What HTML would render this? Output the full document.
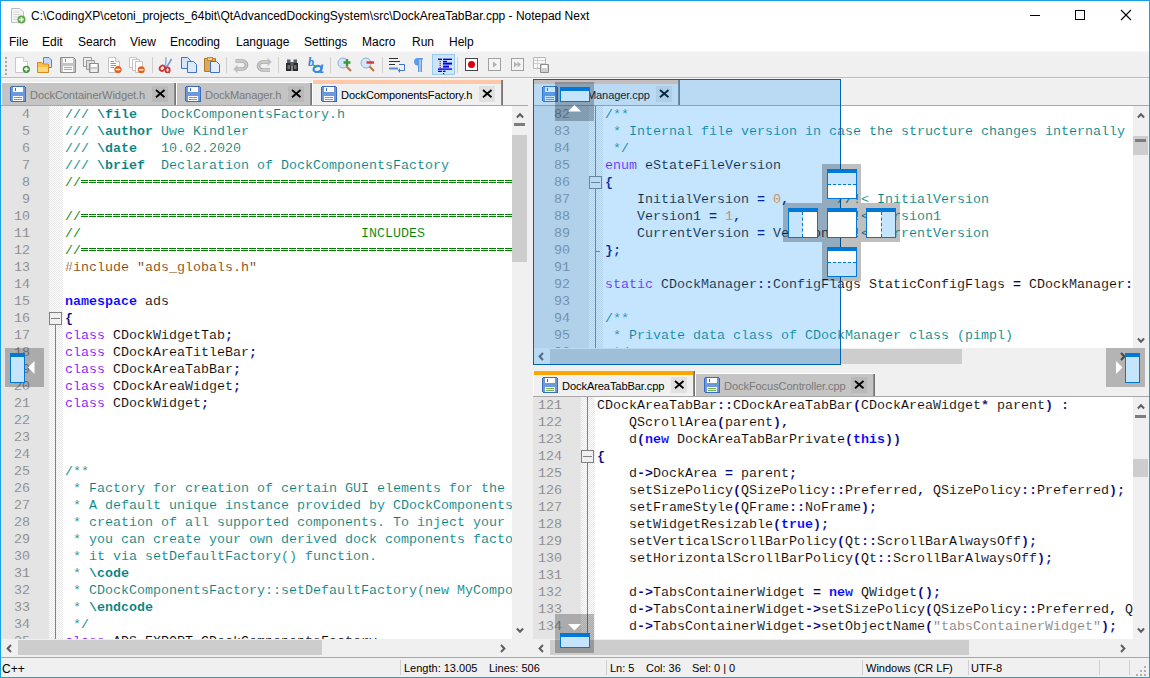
<!DOCTYPE html>
<html><head><meta charset="utf-8"><style>
*{box-sizing:content-box}
html,body{margin:0;padding:0}
body{width:1150px;height:678px;position:relative;overflow:hidden;background:#f0f0f0;font-family:"Liberation Sans",sans-serif}
div{position:absolute}
.ui{position:absolute;font-size:12px;line-height:16px;white-space:nowrap;color:#000}
.st11{font-size:11px}
.tabt{font-size:11.1px;letter-spacing:-0.1px}
.tab{position:absolute;box-sizing:border-box}
.nums{position:absolute;font-family:"Liberation Mono",monospace;font-size:13.333px;line-height:17px;color:#808080;text-align:right;-webkit-text-stroke:0.15px #e4e4e4}
.nums div,.code div{position:static;height:17px;white-space:pre}
.code{position:absolute;font-family:"Liberation Mono",monospace;font-size:13.333px;line-height:17px;color:#000;white-space:pre;-webkit-text-stroke:0.12px #fff}
.code b,.code i{font-style:normal}
.code b{font-weight:bold}
.cd{color:#008080}
.ck{color:#008080}
.cg{color:#008000}
.pp{color:#804000}
.kw{color:#0000ff}
.ty{color:#8000ff}
.op{color:#000080}
.nu{color:#ff8000}
.st{color:#808080}
.fold{position:absolute;background-color:#fff;background-image:repeating-conic-gradient(#e6e6e6 0 25%,#fff 0 50%);background-size:2px 2px}
.eq{display:inline-block;height:17px;vertical-align:top;background-image:repeating-linear-gradient(90deg,#008000 0 7px,transparent 7px 8px),repeating-linear-gradient(90deg,#008000 0 7px,transparent 7px 8px);background-size:100% 1px,100% 1px;background-position:0 6px,0 8px;background-repeat:no-repeat}
.sep{position:absolute;width:1px;background:#d0d0d0}
</style></head><body>

<div style="left:0;top:0;width:1150px;height:52px;background:#fff"></div>
<div style="left:0;top:51px;width:1150px;height:1px;background:#f7f7f7"></div>
<svg style="position:absolute;left:10px;top:7px" width="16" height="17" viewBox="0 0 16 17"><path d="M1.5 1.5H10L13.5 5V15.5H1.5Z" fill="#f4f4f4" stroke="#bdbdbd"/><path d="M3.5 5h6M3.5 7.5h7M3.5 10h5M3.5 12.5h4" stroke="#d6d6d6"/><circle cx="11.5" cy="12.5" r="4" fill="#5aa845"/><path d="M11.5 10v5M9 12.5h5" stroke="#fff" stroke-width="1.6"/></svg>
<div class="ui" style="left:31px;top:8px;font-size:12px">C:\CodingXP\cetoni_projects_64bit\QtAdvancedDockingSystem\src\DockAreaTabBar.cpp - Notepad Next</div>
<div style="left:1030px;top:15px;width:10px;height:1px;background:#000"></div>
<div style="left:1075px;top:10px;width:8px;height:8px;border:1px solid #000"></div>
<svg style="position:absolute;left:1120px;top:9px" width="12" height="12"><path d="M1 1L11 11M11 1L1 11" stroke="#000" stroke-width="1.1"/></svg>
<div class="ui" style="left:9px;top:34px">File</div>
<div class="ui" style="left:42px;top:34px">Edit</div>
<div class="ui" style="left:78px;top:34px">Search</div>
<div class="ui" style="left:130px;top:34px">View</div>
<div class="ui" style="left:170px;top:34px">Encoding</div>
<div class="ui" style="left:236px;top:34px">Language</div>
<div class="ui" style="left:304px;top:34px">Settings</div>
<div class="ui" style="left:362px;top:34px">Macro</div>
<div class="ui" style="left:412px;top:34px">Run</div>
<div class="ui" style="left:449px;top:34px">Help</div>
<div style="left:0;top:52px;width:1150px;height:25px;background:#f0f0f0"></div>
<div style="left:0;top:77px;width:1150px;height:1px;background:#bcbcbc"></div>
<div style="left:0;top:78px;width:1150px;height:1px;background:#f7f7f7"></div>
<div style="left:5px;top:57px;width:2px;height:2px;background:#a8a8a8"></div>
<div style="left:5px;top:61px;width:2px;height:2px;background:#a8a8a8"></div>
<div style="left:5px;top:65px;width:2px;height:2px;background:#a8a8a8"></div>
<div style="left:5px;top:69px;width:2px;height:2px;background:#a8a8a8"></div>
<div style="left:5px;top:73px;width:2px;height:2px;background:#a8a8a8"></div>
<svg style="position:absolute;left:14px;top:57px" width="16" height="16" viewBox="0 0 16 16"><path d="M1.5 0.5H9.5L13.5 4.5V15.5H1.5Z" fill="#fff" stroke="#c8c8c8"/><path d="M9.5 0.5V4.5H13.5" fill="#f0f0f0" stroke="#d0d0d0"/><circle cx="12.3" cy="12.3" r="3.6" fill="#3a9232"/><path d="M12.3 10v4.6M10 12.3h4.6" stroke="#fff" stroke-width="1.6"/></svg>
<svg style="position:absolute;left:37px;top:57px" width="16" height="16" viewBox="0 0 16 16"><path d="M6.5 0.5H12L14.5 3V10.5H6.5Z" fill="#c8dcfa" stroke="#4f86d6"/><path d="M0.5 5.5H5L6.5 7H11.5V15.5H0.5Z" fill="#f6c04a" stroke="#d68a1e"/><path d="M1 10H11V15H1Z" fill="#fbd77a"/></svg>
<svg style="position:absolute;left:60px;top:57px" width="16" height="16" viewBox="0 0 16 16"><path d="M0.5 0.5H13.5L15.5 2.5V15.5H0.5Z" fill="#c4c4c4" stroke="#8c8c8c"/><rect x="3" y="1" width="10" height="5" fill="#fafafa"/><rect x="5" y="2" width="1" height="3" fill="#8c8c8c"/><rect x="3" y="9" width="10" height="6" fill="#fafafa"/><rect x="4" y="10" width="8" height="1" fill="#a8a8a8"/><rect x="4" y="12" width="8" height="1" fill="#a8a8a8"/></svg>
<svg style="position:absolute;left:83px;top:57px" width="16" height="16" viewBox="0 0 16 16"><path d="M0.5 0.5H8.5V9.5H0.5Z" fill="#eee" stroke="#999"/><path d="M3.5 3.5H11.5V12.5H3.5Z" fill="#ddd" stroke="#999"/><path d="M6.5 6.5H15.5V15.5H6.5Z" fill="#c8c8c8" stroke="#8c8c8c"/><rect x="8" y="7" width="6" height="3" fill="#fff"/><rect x="8" y="12" width="6" height="3" fill="#eee"/></svg>
<svg style="position:absolute;left:106px;top:57px" width="16" height="16" viewBox="0 0 16 16"><path d="M2.5 0.5H9.5L13.5 4.5V15.5H2.5Z" fill="#fff" stroke="#c4c4c4"/><path d="M9.5 0.5V4.5H13.5" fill="#eee" stroke="#c4c4c4"/><path d="M4.5 4.5H8M4.5 6.5H10M4.5 8.5H10M4.5 10.5H8" stroke="#999"/><circle cx="12" cy="12.5" r="3.6" fill="#e8601c"/><path d="M9.8 12.5h4.4" stroke="#fff" stroke-width="1.5"/></svg>
<svg style="position:absolute;left:129px;top:57px" width="16" height="16" viewBox="0 0 16 16"><path d="M0.5 0.5H7.5V10.5H0.5Z" fill="#fff" stroke="#c4c4c4"/><path d="M3.5 2.5H10.5V13.5H3.5Z" fill="#fff" stroke="#c4c4c4"/><path d="M6.5 4.5H13.5V15.5H6.5Z" fill="#fff" stroke="#c4c4c4"/><circle cx="12.3" cy="12.8" r="3.5" fill="#e8601c"/><path d="M10.2 12.8h4.2" stroke="#fff" stroke-width="1.5"/></svg>
<svg style="position:absolute;left:158px;top:57px" width="16" height="16" viewBox="0 0 16 16"><path d="M8 0.3L7.6 10" stroke="#8fb4e0" stroke-width="1.6"/><path d="M13.6 2L8.9 9.8" stroke="#6f9ad0" stroke-width="1.6"/><ellipse cx="4.3" cy="11.2" rx="2.4" ry="2.8" fill="none" stroke="#d23030" stroke-width="1.8" transform="rotate(40 4.3 11.2)"/><ellipse cx="9.6" cy="13" rx="2.1" ry="2.7" fill="none" stroke="#d23030" stroke-width="1.8"/></svg>
<svg style="position:absolute;left:181px;top:57px" width="16" height="16" viewBox="0 0 16 16"><path d="M0.5 0.5H6.5L9.5 3.5V11.5H0.5Z" fill="#d4e4fa" stroke="#3d73c8"/><path d="M6.5 4.5H12.5L15.5 7.5V15.5H6.5Z" fill="#dce9fb" stroke="#3d73c8"/></svg>
<svg style="position:absolute;left:204px;top:57px" width="16" height="16" viewBox="0 0 16 16"><path d="M0.5 1.5H11.5V14.5H0.5Z" fill="#e0a858" stroke="#b07830"/><rect x="3.5" y="0.5" width="5" height="3" fill="#f4d080" stroke="#c08838"/><path d="M6.5 4.5H12.5L15.5 7.5V15.5H6.5Z" fill="#e4eefc" stroke="#3d73c8"/></svg>
<svg style="position:absolute;left:233px;top:57px" width="16" height="16" viewBox="0 0 16 16"><path d="M2.5 4H9.5A4 4 0 0 1 9.5 12H4" fill="none" stroke="#a6a6a6" stroke-width="3.6"/><path d="M2.5 4H9.5A4 4 0 0 1 9.5 12H4" fill="none" stroke="#cacaca" stroke-width="1.8"/><path d="M0.3 12L4.5 7.8V16.2Z" fill="#bdbdbd"/></svg>
<svg style="position:absolute;left:256px;top:57px" width="16" height="16" viewBox="0 0 16 16"><path d="M13 5H6.5A4 4 0 0 0 6.5 13H14" fill="none" stroke="#a6a6a6" stroke-width="3.6"/><path d="M13 5H6.5A4 4 0 0 0 6.5 13H14" fill="none" stroke="#cacaca" stroke-width="1.8"/><path d="M15.7 5L11.5 0.8V9.2Z" fill="#bdbdbd"/></svg>
<svg style="position:absolute;left:285px;top:57px" width="16" height="16" viewBox="0 0 16 16"><path d="M1 6H6.5V14H1Z M7.5 6H13V14H7.5Z" fill="#2a2a2a"/><path d="M2 2.5H5.5V6H2Z M8.5 2.5H12V6H8.5Z M5.5 5H8.5V9H5.5Z" fill="#5a6068"/><path d="M2.5 9H5M9 9H11.5M2.5 11H5M9 11H11.5" stroke="#a8b4c0"/></svg>
<svg style="position:absolute;left:308px;top:57px" width="16" height="16" viewBox="0 0 16 16"><text x="0" y="9" font-family="Liberation Serif" font-style="italic" font-weight="bold" font-size="12" fill="#2f7fe0">b</text><ellipse cx="9.5" cy="12" rx="4" ry="3" fill="none" stroke="#3a86e6" stroke-width="2.2" transform="rotate(-15 9.5 12)"/><path d="M14.5 7.5L12.5 15.5H15.5" fill="none" stroke="#3a86e6" stroke-width="2"/><path d="M5 7.5L8 10.5" stroke="#3aa040" stroke-width="1.6"/></svg>
<svg style="position:absolute;left:337px;top:57px" width="16" height="16" viewBox="0 0 16 16"><circle cx="6" cy="6" r="5" fill="#d6e6f8" stroke="#8ab0d8"/><path d="M9.5 9.5L14 14" stroke="#b8793a" stroke-width="2.2"/><path d="M10 2V9M6.5 5.5H13.5" stroke="#3a9a3a" stroke-width="2.4"/></svg>
<svg style="position:absolute;left:360px;top:57px" width="16" height="16" viewBox="0 0 16 16"><circle cx="6" cy="6" r="5" fill="#d6e6f8" stroke="#8ab0d8"/><path d="M9.5 9.5L14 14" stroke="#b8793a" stroke-width="2.2"/><path d="M6.5 5.5H14" stroke="#e03030" stroke-width="2.4"/></svg>
<svg style="position:absolute;left:389px;top:57px" width="16" height="16" viewBox="0 0 16 16"><path d="M0 1.5H9M0 4.5H11M0 7.5H6" stroke="#333"/><path d="M0 11.5H9" stroke="#5a8ad8" stroke-width="2"/><path d="M10 7.5H15.5V13.5H11" fill="none" stroke="#3d73c8"/><path d="M11 11V16L9 13.5Z" fill="#3d73c8"/></svg>
<svg style="position:absolute;left:412px;top:57px" width="16" height="16" viewBox="0 0 16 16"><path d="M5 1H11V2.5H10V15H8.5V2.5H7.5V15H6V8.5A3.8 3.8 0 0 1 5 1Z" fill="#5b9be8"/></svg>
<div style="position:absolute;left:432px;top:54px;width:21px;height:19px;background:#cce4f7;border:1px solid #99c9ef"></div>
<svg style="position:absolute;left:435px;top:57px" width="18" height="18" viewBox="0 0 18 18"><g fill="#0000f0"><rect x="3" y="1.6" width="4" height="1.4"/><rect x="8" y="1.6" width="9" height="1.4"/><rect x="8" y="3.8" width="4" height="1.4"/><rect x="8" y="5.6" width="9" height="2"/><rect x="8" y="8.6" width="6" height="2"/><rect x="3" y="11.4" width="14" height="1.4"/><rect x="3" y="13.6" width="4" height="1.4"/><rect x="8" y="13.6" width="2.5" height="1.4"/><rect x="8" y="16" width="1.2" height="1.2"/></g><g fill="#f00000"><rect x="4.6" y="4" width="1.2" height="1.2"/><rect x="4.6" y="6" width="1.2" height="1.2"/><rect x="4.6" y="8" width="1.2" height="1.2"/><rect x="4.6" y="10" width="1.2" height="1.2"/></g></svg>
<svg style="position:absolute;left:464px;top:57px" width="16" height="16" viewBox="0 0 16 16"><rect x="1.5" y="1.5" width="12" height="12" fill="#fff" stroke="#444"/><circle cx="7.5" cy="7.5" r="3.5" fill="#d80010"/></svg>
<svg style="position:absolute;left:487px;top:57px" width="16" height="16" viewBox="0 0 16 16"><rect x="1.5" y="1.5" width="12" height="12" fill="#f4f4f4" stroke="#a0a0a0"/><path d="M6 4.5L10 7.5L6 10.5Z" fill="#b0b0b0"/></svg>
<svg style="position:absolute;left:510px;top:57px" width="16" height="16" viewBox="0 0 16 16"><rect x="1.5" y="1.5" width="12" height="12" fill="#f4f4f4" stroke="#a0a0a0"/><path d="M4 4.5L7.5 7.5L4 10.5ZM7.5 4.5L11 7.5L7.5 10.5Z" fill="#b0b0b0"/></svg>
<svg style="position:absolute;left:533px;top:57px" width="16" height="17" viewBox="0 0 16 17"><path d="M0.5 0.5H12.5V11.5H0.5Z" fill="#f8f8f8" stroke="#b8b8b8"/><path d="M1 3.5H12M1 6.5H12M4.5 1V11" stroke="#d0d0d0"/><path d="M7.5 7.5H15.5V15.5H7.5Z" fill="#d0d0d0" stroke="#8c8c8c"/><rect x="9" y="8" width="5" height="3" fill="#fff"/></svg>
<div style="position:absolute;left:152px;top:57px;width:1px;height:16px;background:#d0d0d0"></div>
<div style="position:absolute;left:226px;top:57px;width:1px;height:16px;background:#d0d0d0"></div>
<div style="position:absolute;left:278px;top:57px;width:1px;height:16px;background:#d0d0d0"></div>
<div style="position:absolute;left:330px;top:57px;width:1px;height:16px;background:#d0d0d0"></div>
<div style="position:absolute;left:382px;top:57px;width:1px;height:16px;background:#d0d0d0"></div>
<div style="position:absolute;left:457px;top:57px;width:1px;height:16px;background:#d0d0d0"></div>
<div style="left:1px;top:105px;width:527px;height:1px;background:#a8a8a8"></div>
<div style="left:1px;top:82px;width:175px;height:23px;background:#fff"></div>
<div style="left:2px;top:83px;width:174px;height:22px;background:#c4c4c4"></div>
<div style="left:174px;top:83px;width:1px;height:22px;background:#8c8c8c"></div>
<div style="left:175px;top:83px;width:1px;height:22px;background:#747474"></div>
<div style="position:absolute;left:10px;top:86px;width:16px;height:16px"><svg width="16" height="16" viewBox="0 0 16 16" shape-rendering="crispEdges"><path d="M1 0H14L16 2V15L15 16H1L0 15V1Z" fill="#3b6bc0"/><rect x="1" y="1" width="14" height="14" fill="#6e98dc"/><rect x="3" y="1" width="10" height="5" fill="#fff"/><rect x="5" y="2" width="1" height="3" fill="#3b6bc0"/><rect x="3" y="10" width="10" height="5" fill="#fff"/><rect x="4" y="11" width="8" height="1" fill="#6cb44e"/><rect x="4" y="13" width="8" height="1" fill="#6cb44e"/></svg></div>
<div class="ui tabt" style="left:30px;top:87px;color:#7a7a7a">DockContainerWidget.h</div>
<div style="position:absolute;left:152px;top:86px;width:16px;height:16px;background:#b9b9b9"><svg width="16" height="16" viewBox="0 0 16 16"><path d="M4 4L12.5 11.3M12.5 4L4 11.3" stroke="#000" stroke-width="1.8"/></svg></div>
<div style="left:176px;top:82px;width:136px;height:23px;background:#fff"></div>
<div style="left:177px;top:83px;width:135px;height:22px;background:#c4c4c4"></div>
<div style="left:310px;top:83px;width:1px;height:22px;background:#8c8c8c"></div>
<div style="left:311px;top:83px;width:1px;height:22px;background:#747474"></div>
<div style="position:absolute;left:185px;top:86px;width:16px;height:16px"><svg width="16" height="16" viewBox="0 0 16 16" shape-rendering="crispEdges"><path d="M1 0H14L16 2V15L15 16H1L0 15V1Z" fill="#3b6bc0"/><rect x="1" y="1" width="14" height="14" fill="#6e98dc"/><rect x="3" y="1" width="10" height="5" fill="#fff"/><rect x="5" y="2" width="1" height="3" fill="#3b6bc0"/><rect x="3" y="10" width="10" height="5" fill="#fff"/><rect x="4" y="11" width="8" height="1" fill="#6cb44e"/><rect x="4" y="13" width="8" height="1" fill="#6cb44e"/></svg></div>
<div class="ui tabt" style="left:205px;top:87px;color:#7a7a7a">DockManager.h</div>
<div style="position:absolute;left:288px;top:86px;width:16px;height:16px;background:#b9b9b9"><svg width="16" height="16" viewBox="0 0 16 16"><path d="M4 4L12.5 11.3M12.5 4L4 11.3" stroke="#000" stroke-width="1.8"/></svg></div>
<div style="left:312px;top:80px;width:1px;height:25px;background:#fff"></div>
<div style="left:313px;top:80px;width:190px;height:4px;background:#ffc8a8"></div>
<div style="left:313px;top:84px;width:190px;height:21px;background:#f0f0f0"></div>
<div style="left:501px;top:80px;width:1px;height:25px;background:#8c8c8c"></div>
<div style="left:502px;top:80px;width:1px;height:25px;background:#747474"></div>
<div style="position:absolute;left:321px;top:86px;width:16px;height:16px"><svg width="16" height="16" viewBox="0 0 16 16" shape-rendering="crispEdges"><path d="M1 0H14L16 2V15L15 16H1L0 15V1Z" fill="#3b6bc0"/><rect x="1" y="1" width="14" height="14" fill="#6e98dc"/><rect x="3" y="1" width="10" height="5" fill="#fff"/><rect x="5" y="2" width="1" height="3" fill="#3b6bc0"/><rect x="3" y="10" width="10" height="5" fill="#fff"/><rect x="4" y="11" width="8" height="1" fill="#6cb44e"/><rect x="4" y="13" width="8" height="1" fill="#6cb44e"/></svg></div>
<div class="ui tabt" style="left:341px;top:87px;color:#000">DockComponentsFactory.h</div>
<div style="position:absolute;left:479px;top:86px;width:16px;height:16px;background:#e0e0e0"><svg width="16" height="16" viewBox="0 0 16 16"><path d="M4 4L12.5 11.3M12.5 4L4 11.3" stroke="#000" stroke-width="1.8"/></svg></div>
<div style="position:absolute;left:1px;top:106px;width:511px;height:533px;background:#fff;overflow:hidden">
<div style="position:absolute;left:0;top:0;width:48px;height:533px;background:#e4e4e4"></div>
<div class="fold" style="left:48px;top:0;width:14px;height:533px"></div>
<div style="position:absolute;left:48px;top:206px;width:11px;height:11px;border:1px solid #808080;background:#f0f0f0"><div style="position:absolute;left:1px;top:5px;width:9px;height:1px;background:#808080"></div></div>
<div style="position:absolute;left:54px;top:219px;width:1px;height:314px;background:#808080"></div>
<div class="nums" style="left:0;top:0;width:29px"><div>4</div><div>5</div><div>6</div><div>7</div><div>8</div><div>9</div><div>10</div><div>11</div><div>12</div><div>13</div><div>14</div><div>15</div><div>16</div><div>17</div><div>18</div><div>19</div><div>20</div><div>21</div><div>22</div><div>23</div><div>24</div><div>25</div><div>26</div><div>27</div><div>28</div><div>29</div><div>30</div><div>31</div><div>32</div><div>33</div><div>34</div><div>35</div></div>
<div class="code" style="left:64px;top:0"><div><i class="cd">/// </i><b class="ck">\file</b><i class="cd">   DockComponentsFactory.h</i> </div><div><i class="cd">/// </i><b class="ck">\author</b><i class="cd"> Uwe Kindler</i> </div><div><i class="cd">/// </i><b class="ck">\date</b><i class="cd">   10.02.2020</i> </div><div><i class="cd">/// </i><b class="ck">\brief</b><i class="cd">  Declaration of DockComponentsFactory</i> </div><div><i class="cg">//</i><span class="eq" style="width:608px"></span> </div><div> </div><div><i class="cg">//</i><span class="eq" style="width:608px"></span> </div><div><i class="cg">//                                   INCLUDES</i> </div><div><i class="cg">//</i><span class="eq" style="width:608px"></span> </div><div><i class="pp">#include "ads_globals.h"</i> </div><div> </div><div><b class="kw">namespace</b> ads </div><div><b class="op">{</b> </div><div><i class="ty">class</i> CDockWidgetTab<b class="op">;</b> </div><div><i class="ty">class</i> CDockAreaTitleBar<b class="op">;</b> </div><div><i class="ty">class</i> CDockAreaTabBar<b class="op">;</b> </div><div><i class="ty">class</i> CDockAreaWidget<b class="op">;</b> </div><div><i class="ty">class</i> CDockWidget<b class="op">;</b> </div><div> </div><div> </div><div> </div><div><i class="cd">/**</i> </div><div><i class="cd"> * Factory for creation of certain GUI elements for the docking framework.</i> </div><div><i class="cd"> * A default unique instance provided by CDockComponentsFactory is used for</i> </div><div><i class="cd"> * creation of all supported components. To inject your custom components,</i> </div><div><i class="cd"> * you can create your own derived dock components factory and register</i> </div><div><i class="cd"> * it via setDefaultFactory() function.</i> </div><div><i class="cd"> * </i><b class="ck">\code</b><i class="cd"></i> </div><div><i class="cd"> * CDockComponentsFactory::setDefaultFactory(new MyComponentsFactory()));</i> </div><div><i class="cd"> * </i><b class="ck">\endcode</b><i class="cd"></i> </div><div><i class="cd"> */</i> </div><div><i class="ty">class</i> ADS_EXPORT CDockComponentsFactory </div></div>
</div>
<div style="left:512px;top:106px;width:17px;height:533px;background:#f0f0f0"></div>
<svg style="position:absolute;left:515.5px;top:111.5px" width="8" height="7"><path d="M0.9 5.5L4 2.2L7.1 5.5" fill="none" stroke="#5f5f5f" stroke-width="2"/></svg>
<div style="left:514px;top:123px;width:11px;height:3px;background:#7d7d7d"></div>
<div style="left:512px;top:135px;width:15px;height:127px;background:#cdcdcd"></div>
<svg style="position:absolute;left:515.5px;top:626.5px" width="8" height="7"><path d="M0.9 1.5L4 4.8L7.1 1.5" fill="none" stroke="#5f5f5f" stroke-width="2"/></svg>
<div style="left:1px;top:639px;width:528px;height:18px;background:#f0f0f0"></div>
<svg style="position:absolute;left:5.0px;top:643.5px" width="8" height="9"><path d="M6 1L2.6 4.5L6 8" fill="none" stroke="#5f5f5f" stroke-width="2"/></svg>
<div style="left:18px;top:640px;width:304px;height:15px;background:#cdcdcd"></div>
<svg style="position:absolute;left:499.0px;top:643.5px" width="8" height="9"><path d="M2 1L5.4 4.5L2 8" fill="none" stroke="#5f5f5f" stroke-width="2"/></svg>
<div style="left:533px;top:105px;width:616px;height:1px;background:#a8a8a8"></div>
<div style="left:533px;top:80px;width:1px;height:25px;background:#fff"></div>
<div style="left:534px;top:80px;width:146px;height:4px;background:#ffc8a8"></div>
<div style="left:534px;top:84px;width:146px;height:21px;background:#f0f0f0"></div>
<div style="left:678px;top:80px;width:1px;height:25px;background:#8c8c8c"></div>
<div style="left:679px;top:80px;width:1px;height:25px;background:#747474"></div>
<div style="position:absolute;left:542px;top:86px;width:16px;height:16px"><svg width="16" height="16" viewBox="0 0 16 16" shape-rendering="crispEdges"><path d="M1 0H14L16 2V15L15 16H1L0 15V1Z" fill="#3b6bc0"/><rect x="1" y="1" width="14" height="14" fill="#6e98dc"/><rect x="3" y="1" width="10" height="5" fill="#fff"/><rect x="5" y="2" width="1" height="3" fill="#3b6bc0"/><rect x="3" y="10" width="10" height="5" fill="#fff"/><rect x="4" y="11" width="8" height="1" fill="#6cb44e"/><rect x="4" y="13" width="8" height="1" fill="#6cb44e"/></svg></div>
<div class="ui tabt" style="left:562px;top:87px;color:#000">DockManager.cpp</div>
<div style="position:absolute;left:656px;top:86px;width:16px;height:16px;background:#e0e0e0"><svg width="16" height="16" viewBox="0 0 16 16"><path d="M4 4L12.5 11.3M12.5 4L4 11.3" stroke="#000" stroke-width="1.8"/></svg></div>
<div style="position:absolute;left:533px;top:106px;width:600px;height:242px;background:#fff;overflow:hidden">
<div style="position:absolute;left:0;top:0;width:56px;height:242px;background:#e4e4e4"></div>
<div class="fold" style="left:56px;top:0;width:14px;height:242px"></div>
<div style="position:absolute;left:62px;top:0px;width:1px;height:242px;background:#808080"></div>
<div style="position:absolute;left:56px;top:70px;width:11px;height:11px;border:1px solid #808080;background:#f0f0f0"><div style="position:absolute;left:1px;top:5px;width:9px;height:1px;background:#808080"></div></div>
<div style="position:absolute;left:62px;top:145px;width:5px;height:1px;background:#808080"></div>
<div class="nums" style="left:0;top:0;width:37px"><div>82</div><div>83</div><div>84</div><div>85</div><div>86</div><div>87</div><div>88</div><div>89</div><div>90</div><div>91</div><div>92</div><div>93</div><div>94</div><div>95</div><div>96</div></div>
<div class="code" style="left:72px;top:0"><div><i class="cd">/**</i> </div><div><i class="cd"> * Internal file version in case the structure changes internally</i> </div><div><i class="cd"> */</i> </div><div><i class="ty">enum</i> eStateFileVersion </div><div><b class="op">{</b> </div><div>    InitialVersion <b class="op">=</b> <i class="nu">0</i><b class="op">,</b>      <i class="cd">//!&lt; InitialVersion</i> </div><div>    Version1 <b class="op">=</b> <i class="nu">1</i><b class="op">,</b>            <i class="cd">//!&lt; Version1</i> </div><div>    CurrentVersion <b class="op">=</b> Version1<i class="cd">//!&lt; CurrentVersion</i> </div><div><b class="op">};</b> </div><div> </div><div><i class="ty">static</i> CDockManager<b class="op">::</b>ConfigFlags StaticConfigFlags <b class="op">=</b> CDockManager<b class="op">::</b>DefaultNonOpaqueConfig<b class="op">;</b> </div><div> </div><div><i class="cd">/**</i> </div><div><i class="cd"> * Private data class of CDockManager class (pimpl)</i> </div><div><i class="cd"> */</i> </div></div>
</div>
<div style="left:1133px;top:106px;width:16px;height:242px;background:#f0f0f0"></div>
<svg style="position:absolute;left:1137.0px;top:111.5px" width="8" height="7"><path d="M0.9 5.5L4 2.2L7.1 5.5" fill="none" stroke="#5f5f5f" stroke-width="2"/></svg>
<div style="left:1133px;top:136px;width:15px;height:19px;background:#cdcdcd"></div>
<div style="left:1135px;top:139px;width:11px;height:3px;background:#7d7d7d"></div>
<svg style="position:absolute;left:1137.0px;top:336.5px" width="8" height="7"><path d="M0.9 1.5L4 4.8L7.1 1.5" fill="none" stroke="#5f5f5f" stroke-width="2"/></svg>
<div style="left:533px;top:348px;width:616px;height:17px;background:#f0f0f0"></div>
<svg style="position:absolute;left:537.0px;top:351.5px" width="8" height="9"><path d="M6 1L2.6 4.5L6 8" fill="none" stroke="#5f5f5f" stroke-width="2"/></svg>
<div style="left:550px;top:349px;width:412px;height:15px;background:#cdcdcd"></div>
<svg style="position:absolute;left:1119.0px;top:351.5px" width="8" height="9"><path d="M2 1L5.4 4.5L2 8" fill="none" stroke="#5f5f5f" stroke-width="2"/></svg>
<div style="left:533px;top:396px;width:616px;height:1px;background:#a8a8a8"></div>
<div style="left:533px;top:371px;width:1px;height:25px;background:#fff"></div>
<div style="left:534px;top:371px;width:161px;height:4px;background:#ffa500"></div>
<div style="left:534px;top:375px;width:161px;height:21px;background:#f0f0f0"></div>
<div style="left:693px;top:371px;width:1px;height:25px;background:#8c8c8c"></div>
<div style="left:694px;top:371px;width:1px;height:25px;background:#747474"></div>
<div style="position:absolute;left:542px;top:377px;width:16px;height:16px"><svg width="16" height="16" viewBox="0 0 16 16" shape-rendering="crispEdges"><path d="M1 0H14L16 2V15L15 16H1L0 15V1Z" fill="#3b6bc0"/><rect x="1" y="1" width="14" height="14" fill="#6e98dc"/><rect x="3" y="1" width="10" height="5" fill="#fff"/><rect x="5" y="2" width="1" height="3" fill="#3b6bc0"/><rect x="3" y="10" width="10" height="5" fill="#fff"/><rect x="4" y="11" width="8" height="1" fill="#6cb44e"/><rect x="4" y="13" width="8" height="1" fill="#6cb44e"/></svg></div>
<div class="ui tabt" style="left:562px;top:378px;color:#000">DockAreaTabBar.cpp</div>
<div style="position:absolute;left:671px;top:377px;width:16px;height:16px;background:#e0e0e0"><svg width="16" height="16" viewBox="0 0 16 16"><path d="M4 4L12.5 11.3M12.5 4L4 11.3" stroke="#000" stroke-width="1.8"/></svg></div>
<div style="left:695px;top:373px;width:180px;height:23px;background:#fff"></div>
<div style="left:696px;top:374px;width:179px;height:22px;background:#c4c4c4"></div>
<div style="left:873px;top:374px;width:1px;height:22px;background:#8c8c8c"></div>
<div style="left:874px;top:374px;width:1px;height:22px;background:#747474"></div>
<div style="position:absolute;left:704px;top:377px;width:16px;height:16px"><svg width="16" height="16" viewBox="0 0 16 16" shape-rendering="crispEdges"><path d="M1 0H14L16 2V15L15 16H1L0 15V1Z" fill="#3b6bc0"/><rect x="1" y="1" width="14" height="14" fill="#6e98dc"/><rect x="3" y="1" width="10" height="5" fill="#fff"/><rect x="5" y="2" width="1" height="3" fill="#3b6bc0"/><rect x="3" y="10" width="10" height="5" fill="#fff"/><rect x="4" y="11" width="8" height="1" fill="#6cb44e"/><rect x="4" y="13" width="8" height="1" fill="#6cb44e"/></svg></div>
<div class="ui tabt" style="left:724px;top:378px;color:#7a7a7a">DockFocusController.cpp</div>
<div style="position:absolute;left:851px;top:377px;width:16px;height:16px;background:#b9b9b9"><svg width="16" height="16" viewBox="0 0 16 16"><path d="M4 4L12.5 11.3M12.5 4L4 11.3" stroke="#000" stroke-width="1.8"/></svg></div>
<div style="position:absolute;left:533px;top:397px;width:600px;height:242px;background:#fff;overflow:hidden">
<div style="position:absolute;left:0;top:0;width:48px;height:242px;background:#e4e4e4"></div>
<div class="fold" style="left:48px;top:0;width:14px;height:242px"></div>
<div style="position:absolute;left:54px;top:0px;width:1px;height:242px;background:#808080"></div>
<div style="position:absolute;left:48px;top:53px;width:11px;height:11px;border:1px solid #808080;background:#f0f0f0"><div style="position:absolute;left:1px;top:5px;width:9px;height:1px;background:#808080"></div></div>
<div class="nums" style="left:0;top:0;width:29px"><div>121</div><div>122</div><div>123</div><div>124</div><div>125</div><div>126</div><div>127</div><div>128</div><div>129</div><div>130</div><div>131</div><div>132</div><div>133</div><div>134</div></div>
<div class="code" style="left:64px;top:0"><div>CDockAreaTabBar<b class="op">::</b>CDockAreaTabBar<b class="op">(</b>CDockAreaWidget<b class="op">*</b> parent<b class="op">)</b> <b class="op">:</b> </div><div>    QScrollArea<b class="op">(</b>parent<b class="op">),</b> </div><div>    d<b class="op">(</b><b class="kw">new</b> DockAreaTabBarPrivate<b class="op">(</b><b class="kw">this</b><b class="op">))</b> </div><div><b class="op">{</b> </div><div>    d<b class="op">-&gt;</b>DockArea <b class="op">=</b> parent<b class="op">;</b> </div><div>    setSizePolicy<b class="op">(</b>QSizePolicy<b class="op">::</b>Preferred<b class="op">,</b> QSizePolicy<b class="op">::</b>Preferred<b class="op">);</b> </div><div>    setFrameStyle<b class="op">(</b>QFrame<b class="op">::</b>NoFrame<b class="op">);</b> </div><div>    setWidgetResizable<b class="op">(</b><b class="kw">true</b><b class="op">);</b> </div><div>    setVerticalScrollBarPolicy<b class="op">(</b>Qt<b class="op">::</b>ScrollBarAlwaysOff<b class="op">);</b> </div><div>    setHorizontalScrollBarPolicy<b class="op">(</b>Qt<b class="op">::</b>ScrollBarAlwaysOff<b class="op">);</b> </div><div> </div><div>    d<b class="op">-&gt;</b>TabsContainerWidget <b class="op">=</b> <b class="kw">new</b> QWidget<b class="op">();</b> </div><div>    d<b class="op">-&gt;</b>TabsContainerWidget<b class="op">-&gt;</b>setSizePolicy<b class="op">(</b>QSizePolicy<b class="op">::</b>Preferred<b class="op">,</b> QSizePolicy<b class="op">::</b>Preferred<b class="op">);</b> </div><div>    d<b class="op">-&gt;</b>TabsContainerWidget<b class="op">-&gt;</b>setObjectName<b class="op">(</b><i class="st">"tabsContainerWidget"</i><b class="op">);</b> </div></div>
</div>
<div style="left:1133px;top:397px;width:16px;height:242px;background:#f0f0f0"></div>
<svg style="position:absolute;left:1137.0px;top:402.5px" width="8" height="7"><path d="M0.9 5.5L4 2.2L7.1 5.5" fill="none" stroke="#5f5f5f" stroke-width="2"/></svg>
<div style="left:1135px;top:415px;width:11px;height:3px;background:#7d7d7d"></div>
<div style="left:1133px;top:459px;width:15px;height:18px;background:#cdcdcd"></div>
<svg style="position:absolute;left:1137.0px;top:626.5px" width="8" height="7"><path d="M0.9 1.5L4 4.8L7.1 1.5" fill="none" stroke="#5f5f5f" stroke-width="2"/></svg>
<div style="left:533px;top:639px;width:616px;height:18px;background:#f0f0f0"></div>
<svg style="position:absolute;left:537.0px;top:643.5px" width="8" height="9"><path d="M6 1L2.6 4.5L6 8" fill="none" stroke="#5f5f5f" stroke-width="2"/></svg>
<div style="left:550px;top:640px;width:419px;height:15px;background:#cdcdcd"></div>
<svg style="position:absolute;left:1119.0px;top:643.5px" width="8" height="9"><path d="M2 1L5.4 4.5L2 8" fill="none" stroke="#5f5f5f" stroke-width="2"/></svg>
<div style="left:0;top:657px;width:1150px;height:1px;background:#a8a8a8"></div>
<div style="left:0;top:658px;width:1150px;height:20px;background:#f0f0f0"></div>
<div class="ui" style="left:2px;top:661px">C++</div>
<div class="sep" style="left:400px;top:660px;height:15px"></div>
<div class="sep" style="left:606px;top:660px;height:15px"></div>
<div class="sep" style="left:862px;top:660px;height:15px"></div>
<div class="sep" style="left:968px;top:660px;height:15px"></div>
<div class="sep" style="left:1099px;top:660px;height:15px"></div>
<div class="sep" style="left:1129px;top:660px;height:15px"></div>
<div class="ui st11" style="left:404px;top:660px">Length: 13.005</div>
<div class="ui st11" style="left:489px;top:660px">Lines: 506</div>
<div class="ui st11" style="left:610px;top:660px">Ln: 5</div>
<div class="ui st11" style="left:646px;top:660px">Col: 36</div>
<div class="ui st11" style="left:692px;top:660px">Sel: 0 | 0</div>
<div class="ui st11" style="left:866px;top:660px">Windows (CR LF)</div>
<div class="ui st11" style="left:971px;top:660px">UTF-8</div>
<div style="left:1144px;top:666px;width:2px;height:2px;background:#b0b0b0"></div>
<div style="left:1144px;top:670px;width:2px;height:2px;background:#b0b0b0"></div>
<div style="left:1140px;top:670px;width:2px;height:2px;background:#b0b0b0"></div>
<div style="left:1144px;top:674px;width:2px;height:2px;background:#b0b0b0"></div>
<div style="left:1140px;top:674px;width:2px;height:2px;background:#b0b0b0"></div>
<div style="left:1136px;top:674px;width:2px;height:2px;background:#b0b0b0"></div>
<div style="position:absolute;left:533px;top:79px;width:306px;height:284px;border:1px solid #0064b3;background:rgba(24,153,255,0.251)"></div>
<div style="position:absolute;left:822px;top:164px;width:39px;height:39px;background:rgba(0,0,0,0.251)"></div>
<div style="position:absolute;left:783px;top:203px;width:39px;height:39px;background:rgba(0,0,0,0.251)"></div>
<div style="position:absolute;left:822px;top:203px;width:39px;height:39px;background:rgba(0,0,0,0.251)"></div>
<div style="position:absolute;left:861px;top:203px;width:39px;height:39px;background:rgba(0,0,0,0.251)"></div>
<div style="position:absolute;left:822px;top:242px;width:39px;height:39px;background:rgba(0,0,0,0.251)"></div>
<div style="position:absolute;left:827px;top:169px;width:28px;height:28px;border:1px solid #0078d7;background:#fff;overflow:hidden"><div style="position:absolute;left:0;top:3px;width:28px;height:11px;background:#c5e5ff;border-bottom:1px dashed #0078d7"></div><div style="position:absolute;left:0;top:0;width:28px;height:3px;background:#0078d7"></div></div>
<div style="position:absolute;left:788px;top:208px;width:28px;height:28px;border:1px solid #0078d7;background:#fff;overflow:hidden"><div style="position:absolute;left:0;top:3px;width:13px;height:25px;background:#c5e5ff;border-right:1px dashed #0078d7"></div><div style="position:absolute;left:0;top:0;width:28px;height:3px;background:#0078d7"></div></div>
<div style="position:absolute;left:827px;top:208px;width:28px;height:28px;border:1px solid #0078d7;background:#fff;overflow:hidden"><div style="position:absolute;left:0;top:0;width:28px;height:3px;background:#0078d7"></div></div>
<div style="position:absolute;left:866px;top:208px;width:28px;height:28px;border:1px solid #0078d7;background:#fff;overflow:hidden"><div style="position:absolute;left:14px;top:3px;width:14px;height:25px;background:#c5e5ff;border-left:1px dashed #0078d7"></div><div style="position:absolute;left:0;top:0;width:28px;height:3px;background:#0078d7"></div></div>
<div style="position:absolute;left:827px;top:247px;width:28px;height:28px;border:1px solid #0078d7;background:#fff;overflow:hidden"><div style="position:absolute;left:0;top:14px;width:28px;height:14px;background:#c5e5ff;border-top:1px dashed #0078d7"></div><div style="position:absolute;left:0;top:0;width:28px;height:3px;background:#0078d7"></div></div>
<div style="position:absolute;left:555px;top:82px;width:39px;height:39px;background:rgba(0,0,0,0.251)"></div>
<div style="position:absolute;left:560px;top:87px;width:28px;height:13px;border:1px solid #0078d7;background:#c5e5ff"><div style="position:absolute;left:0;top:0;width:28px;height:3px;background:#0078d7"></div></div>
<svg style="position:absolute;left:567px;top:104px" width="15" height="8.5"><path d="M7.5 1 L1 7.5 L14 7.5Z" fill="#fff"/></svg>
<div style="position:absolute;left:555px;top:614px;width:39px;height:39px;background:rgba(0,0,0,0.251)"></div>
<div style="position:absolute;left:560px;top:633px;width:28px;height:13px;border:1px solid #0078d7;background:#c5e5ff"><div style="position:absolute;left:0;top:0;width:28px;height:3px;background:#0078d7"></div></div>
<svg style="position:absolute;left:567px;top:622.5px" width="15" height="8.5"><path d="M1 1.0 L14 1.0 L7.5 7.5Z" fill="#fff"/></svg>
<div style="position:absolute;left:5px;top:348px;width:39px;height:39px;background:rgba(0,0,0,0.251)"></div>
<div style="position:absolute;left:10px;top:353px;width:13px;height:28px;border:1px solid #0078d7;background:#c5e5ff"><div style="position:absolute;left:0;top:0;width:13px;height:3px;background:#0078d7"></div></div>
<svg style="position:absolute;left:27px;top:360px" width="8.5" height="15"><path d="M1 7.5 L7.5 1 L7.5 14Z" fill="#fff"/></svg>
<div style="position:absolute;left:1106px;top:348px;width:39px;height:39px;background:rgba(0,0,0,0.251)"></div>
<div style="position:absolute;left:1125px;top:353px;width:13px;height:28px;border:1px solid #0078d7;background:#c5e5ff"><div style="position:absolute;left:0;top:0;width:13px;height:3px;background:#0078d7"></div></div>
<svg style="position:absolute;left:1114.5px;top:360px" width="8.5" height="15"><path d="M1.0 1 L7.5 7.5 L1.0 14Z" fill="#fff"/></svg>
<div style="left:0;top:0;width:1148px;height:676px;border:1px solid #18a0e6"></div>
</body></html>
